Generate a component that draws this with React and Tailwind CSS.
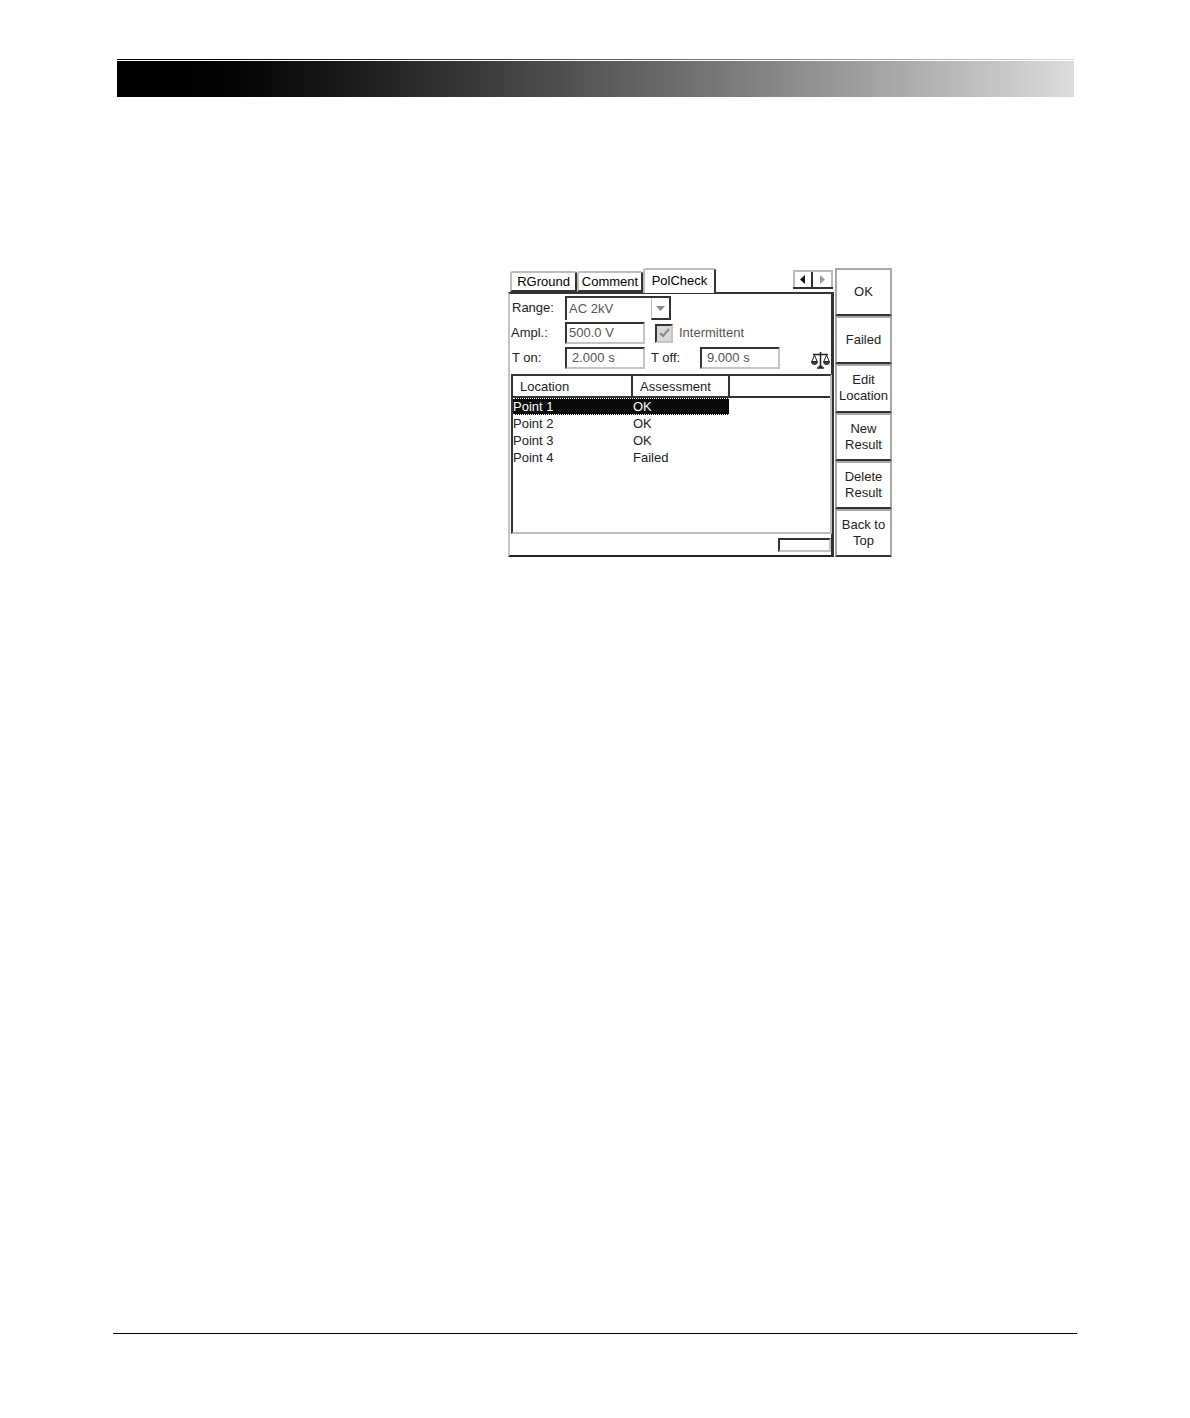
const sunken = "border-2 border-t-[#333] border-l-[#333] border-b-[#c4c4c4] border-r-[#c4c4c4]";

function Tab({ w, h, active, children }) {
  return (
    <div
      className={
        "flex items-center justify-center rounded-t-[3px] border-t-2 border-l-2 border-r-2 border-t-[#bdbdbd] border-l-[#bdbdbd] bg-white " +
        (active ? "border-r-[#333] z-10 -mb-[1px] pb-[2px]" : "border-r-[#333] border-b-2 border-b-[#333]")
      }
      style={{ width: w, height: h }}
    >
      {children}
    </div>
  );
}

function Field({ w, children, left = 5 }) {
  return (
    <div className={"flex h-[22px] items-center text-[#555] " + sunken} style={{ width: w, paddingLeft: left }}>
      {children}
    </div>
  );
}

function SideButton({ h, extra = "", children }) {
  return (
    <div
      className={"flex flex-col items-center justify-center border-2 border-t-[#a8a8a8] border-l-[#a8a8a8] border-r-[#a8a8a8] border-b-[#333] bg-white text-center leading-[16px] text-[#222] " + extra}
      style={{ height: h }}
    >
      {children}
    </div>
  );
}

function Row({ a, b, selected }) {
  return (
    <div
      className={
        "flex h-[17px] w-[216px] items-center " +
        (selected ? "border-y border-dotted border-white bg-[#0a0a0a] text-white" : "text-[#222]")
      }
    >
      <span className="w-[120px]">{a}</span>
      <span>{b}</span>
    </div>
  );
}

function HeaderCell({ w, grow, children }) {
  return (
    <div
      className={"flex h-[22px] items-center border-b-2 border-[#333] pl-[7px] pt-[1px] text-[#222] " + (grow ? "flex-1" : "border-r-2")}
      style={grow ? undefined : { width: w }}
    >
      {children}
    </div>
  );
}

export default function App() {
  return (
    <div className="h-[1418px] w-[1190px] bg-white font-['Liberation_Sans',Arial,sans-serif] text-[13px]">
      <div className="ml-[117px] w-[957px] pt-[59px]">
        <div className="h-[1px] bg-linear-to-r from-black via-[#555] to-[#d8d8d8]" />
        <div className="mt-[1px] h-[36px] bg-linear-to-r from-black via-[#585858] to-[#dcdcdc]" />
      </div>

      <div className="ml-[508px] mt-[171px] flex h-[289px] w-[384px]">
        <div className="flex h-full w-[326px] flex-col">
          <div className="flex h-[24px] items-end pl-[2px]">
            <Tab w={67} h={21}>RGround</Tab>
            <Tab w={66} h={21}>Comment</Tab>
            <Tab w={73} h={25} active>PolCheck</Tab>
            <div className="ml-auto mb-[3px] mr-[1px] flex h-[19px] w-[40px] border-b-2 border-b-[#333] border-t-2 border-t-[#bbb]">
              <div className="flex w-[20px] items-center justify-center border-x-2 border-l-[#bbb] border-r-[#333]">
                <svg width="6" height="9" viewBox="0 0 6 9"><path d="M5 0v9L0 4.500z" fill="#111" /></svg>
              </div>
              <div className="flex w-[20px] items-center justify-center border-r-2 border-r-[#bbb]">
                <svg width="6" height="9" viewBox="0 0 6 9"><path d="M1 0v9l5-4.500z" fill="#999" /></svg>
              </div>
            </div>
          </div>

          <div className="flex-1 border-t-2 border-r-[3px] border-b-2 border-l-2 border-t-[#333] border-r-[#333] border-b-[#222] border-l-[#c4c4c4] text-[#222]">
            <div className="flex items-center pt-[2px]">
              <span className="w-[55px] pl-[2px]">Range:</span>
              <div className={"flex h-[24px] w-[106px] items-center justify-between border-r-0 border-b-0 pl-[2px] text-[#555] " + sunken}>
                AC 2kV
                <div className="flex h-full w-[20px] items-center justify-center border-r-2 border-b-2 border-[#333] border-l border-l-[#bbb]">
                  <svg width="9" height="5" viewBox="0 0 9 5"><path d="M0 0h9L4.500 5z" fill="#888" /></svg>
                </div>
              </div>
            </div>
            <div className="mt-[2px] flex items-center">
              <span className="w-[55px] pl-[1px]">Ampl.:</span>
              <Field w={80} left={2}>500.0 V</Field>
              <div className={"ml-[10px] flex h-[19px] w-[18px] items-center justify-center bg-[#d8d8d8] " + sunken}>
                <svg width="11" height="10" viewBox="0 0 11 10"><path d="M1 5l3 3 6-7" fill="none" stroke="#888" strokeWidth="2" /></svg>
              </div>
              <span className="ml-[6px] text-[#555]">Intermittent</span>
            </div>
            <div className="mt-[3px] flex items-center">
              <span className="w-[55px] pl-[2px]">T on:</span>
              <Field w={80}>2.000 s</Field>
              <span className="ml-[6px] w-[49px]">T off:</span>
              <Field w={80}>9.000 s</Field>
              <svg className="ml-[31px] mt-[3px]" width="19" height="18" viewBox="0 0 19 18" fill="none" stroke="#222" strokeWidth="1">
                <path d="M9.500 1v14M2 3.500h15M6 17h7M7.500 15.500h4" strokeWidth="1.500" />
                <path d="M3.500 4L1 10M3.500 4L6 10M15.500 4L13 10M15.500 4L18 10" />
                <path d="M0.500 10.500h6a3 3 0 0 1-6 0zM12.500 10.500h6a3 3 0 0 1-6 0z" fill="#444" />
              </svg>
            </div>

            <div className="ml-[1px] mt-[5px] h-[160px] w-[321px] border-2 border-t-[#333] border-l-[#333] border-r-[#bbb] border-b-[#bbb]">
              <div className="flex">
                <HeaderCell w={120}>Location</HeaderCell>
                <HeaderCell w={97}>Assessment</HeaderCell>
                <HeaderCell grow />
              </div>
              <Row a="Point 1" b="OK" selected />
              <Row a="Point 2" b="OK" />
              <Row a="Point 3" b="OK" />
              <Row a="Point 4" b="Failed" />
            </div>
            <div className="flex justify-end pt-[4px]">
              <div className={"h-[14px] w-[53px] " + sunken} />
            </div>
          </div>
        </div>

        <div className="ml-[1px] flex w-[57px] flex-col">
          <SideButton h={48}>OK</SideButton>
          <SideButton h={48}>Failed</SideButton>
          <SideButton h={49} extra="pb-[2px]"><span>Edit</span><span>Location</span></SideButton>
          <SideButton h={48}><span>New</span><span>Result</span></SideButton>
          <SideButton h={48}><span>Delete</span><span>Result</span></SideButton>
          <SideButton h={48}><span>Back to</span><span>Top</span></SideButton>
        </div>
      </div>

      <div className="ml-[113px] mt-[776px] h-[1px] w-[964px] bg-black" />
    </div>
  );
}
